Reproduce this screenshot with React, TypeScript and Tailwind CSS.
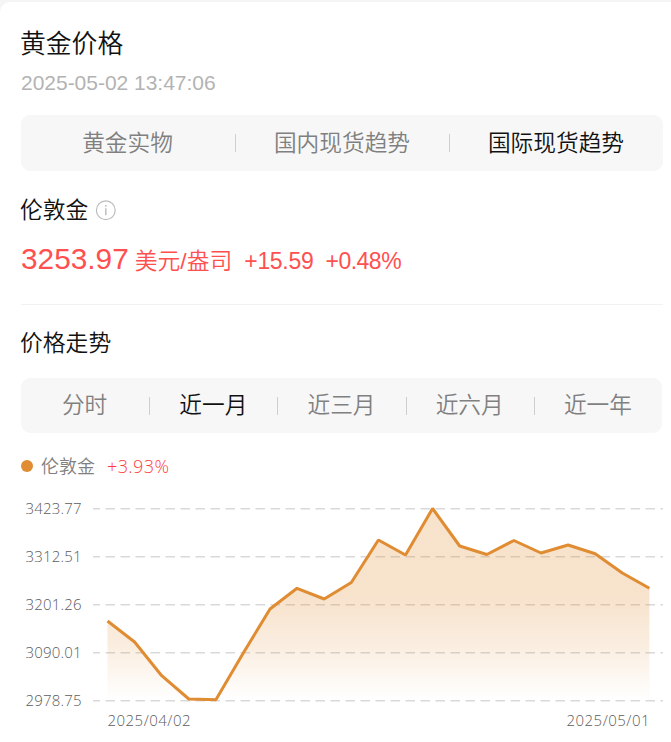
import clsx from 'clsx';

interface TabBarProps {
  items: string[];
  active: string;
  className?: string;
}

function TabBar({ items, active, className }: TabBarProps) {
  return (
    <div className={clsx('flex items-center rounded-[9px] bg-[#f7f7f7]', className)}>
      {items.map((item, i) => (
        <button
          key={item}
          className={clsx(
            'flex h-full flex-1 items-center text-[22.7px] leading-none whitespace-nowrap',
            item === active ? 'text-[#111]' : 'text-[#808080]'
          )}
        >
          {i > 0 && <span className="h-[18px] w-px bg-[#cfcfcf]" />}
          <span className="flex-1 pr-px text-center">{item}</span>
        </button>
      ))}
    </div>
  );
}

const yLabels = ['3423.77', '3312.51', '3201.26', '3090.01', '2978.75'];

const points = [
  [107.5, 131], [134.6, 152], [161.7, 185.7], [188.8, 209], [215.9, 209.8],
  [243, 163.5], [270, 119], [297, 98.3], [324.2, 109], [351.3, 92.5],
  [378.4, 50], [405.5, 65], [432.6, 18.5], [459.7, 56], [486.8, 64.5],
  [513.9, 50.5], [541, 63], [568.1, 55], [595.2, 63.7], [622.3, 83], [649.4, 98.3],
];

function TrendChart() {
  const line = points.map((p) => p.join(',')).join(' ');

  return (
    <svg
      width="671"
      height="252"
      viewBox="0 0 671 252"
      className="-ml-[21px] block shrink-0 font-['Open_Sans','Noto_Sans_CJK_SC',sans-serif] text-[15px] font-[350]"
    >
      <defs>
        <linearGradient id="area" x1="0" y1="0" x2="0" y2="1">
          <stop offset="0" stopColor="#e08c32" stopOpacity="0.25" />
          <stop offset="0.45" stopColor="#e08c32" stopOpacity="0.25" />
          <stop offset="0.72" stopColor="#e08c32" stopOpacity="0.15" />
          <stop offset="1" stopColor="#e08c32" stopOpacity="0" />
        </linearGradient>
      </defs>
      {yLabels.map((label, i) => (
        <g key={label}>
          <text x="25.5" y={24 + i * 48} fill="#5c5c5c" textLength="56">
            {label}
          </text>
          <line
            x1="93"
            x2="663"
            y1={18.75 + i * 48}
            y2={18.75 + i * 48}
            stroke="#d9d9d9"
            strokeWidth="1.5"
            strokeDasharray="9.5 5.5"
            strokeDashoffset="2.5"
          />
        </g>
      ))}
      <polygon points={`107.5,210 ${line} 649.4,210`} fill="url(#area)" />
      <polyline points={line} fill="none" stroke="#e08c32" strokeWidth="3" strokeLinejoin="bevel" />
      <text x="107.5" y="236" fill="#5c5c5c" textLength="83">
        2025/04/02
      </text>
      <text x="566.5" y="236" fill="#5c5c5c" textLength="83">
        2025/05/01
      </text>
    </svg>
  );
}

export default function App() {
  return (
    <div className="h-[742px] w-[671px] overflow-hidden bg-[#f5f5f5] pt-[2px] font-['Liberation_Sans','Noto_Sans_CJK_SC',sans-serif] font-[350]">
      <div className="flex h-[740px] flex-col rounded-tl-[10px] bg-white pl-[21px]">
        <h1 className="mt-[26px] -ml-px h-8 text-[25.8px] leading-8 font-[350] text-[#111]">黄金价格</h1>
        <p className="mt-[9px] h-7 text-[21px] leading-7 tracking-[-0.02px] text-[#b3b3b3]">2025-05-02 13:47:06</p>

        <TabBar
          items={['黄金实物', '国内现货趋势', '国际现货趋势']}
          active="国际现货趋势"
          className="mt-[18px] h-14 w-[642px]"
        />

        <div className="mt-[23px] -ml-px flex h-8 items-center gap-[7px]">
          <h2 className="text-[22.8px] leading-8 font-[350] text-[#111]">伦敦金</h2>
          <svg width="21" height="21" viewBox="0 0 21 21" fill="none" stroke="#bbb">
            <circle cx="10.8" cy="10.3" r="9.4" strokeWidth="1.2" />
            <path d="M10.8 8.3v7M10.8 5.1v1.7" strokeWidth="1.4" />
          </svg>
        </div>

        <div className="mt-[13px] flex h-10 items-baseline leading-10 whitespace-nowrap text-[#ff5050]">
          <span className="text-[29.8px]">3253.97</span>
          <span className="ml-1.5 text-[22.8px]">美元/盎司</span>
          <span className="ml-3 text-[23px] tracking-[-0.3px]">+15.59</span>
          <span className="ml-3 text-[23px] tracking-[-0.5px]">+0.48%</span>
        </div>

        <div className="mt-[25px] h-px w-[642px] bg-[#f2f2f2]" />

        <h2 className="mt-[22px] -ml-px h-8 text-[22.8px] leading-8 font-[350] text-[#111]">价格走势</h2>

        <TabBar
          items={['分时', '近一月', '近三月', '近六月', '近一年']}
          active="近一月"
          className="mt-[19px] h-[55px] w-[641px]"
        />

        <div className="mt-5 flex h-[26px] items-center font-['Open_Sans','Noto_Sans_CJK_SC',sans-serif] text-[18px] leading-[26px]">
          <span className="h-3 w-3 rounded-full bg-[#e08c32]" />
          <span className="ml-2 text-[#808080]">伦敦金</span>
          <span className="ml-3 text-[18px] tracking-[0.4px] text-[#ff3c3c]">+3.93%</span>
        </div>

        <div className="mt-[11px]">
          <TrendChart />
        </div>
      </div>
    </div>
  );
}
